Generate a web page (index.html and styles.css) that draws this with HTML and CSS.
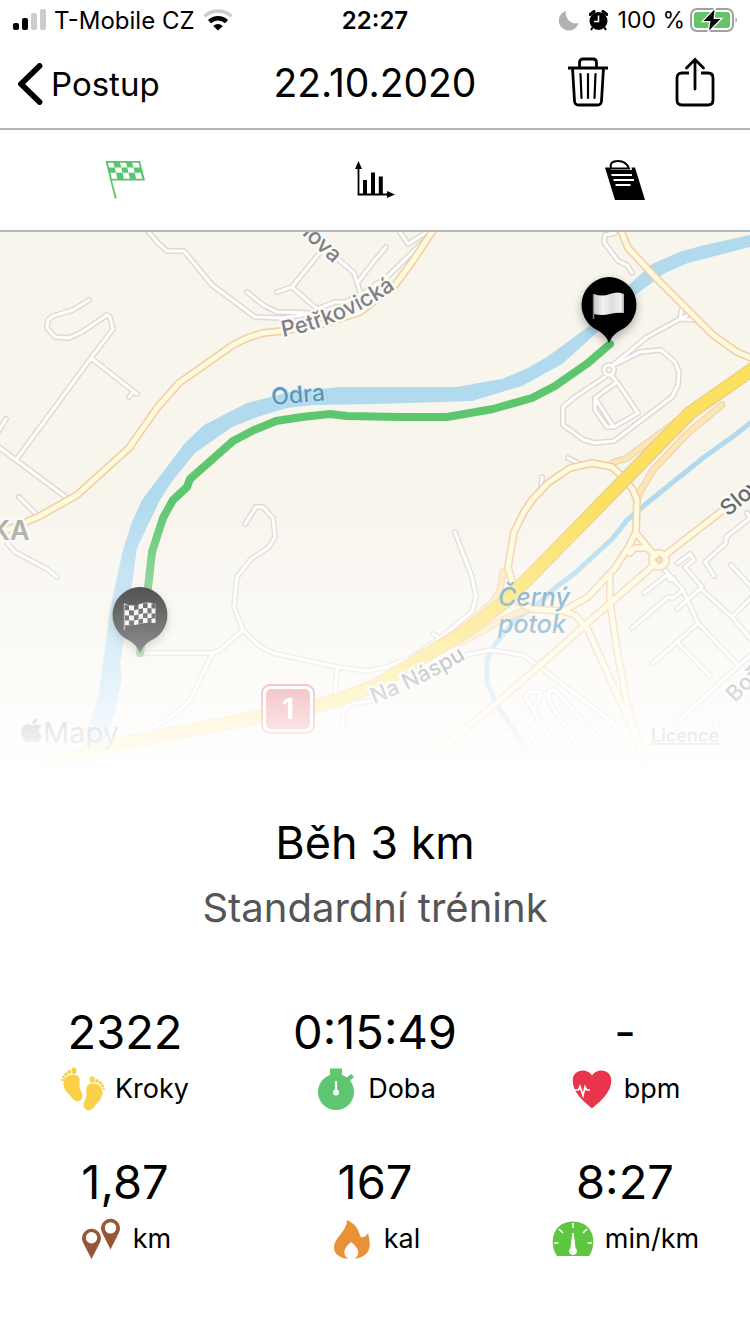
FILE: index.html
```html
<!DOCTYPE html>
<html lang="cs">
<head>
<meta charset="utf-8">
<meta name="viewport" content="width=device-width, initial-scale=1">
<title>22.10.2020</title>
<link rel="stylesheet" href="styles.css">
</head>
<body>
<div class="status-bar">
  <div class="status-left">
    <svg class="signal" viewBox="0 0 34 22" aria-hidden="true">
      <rect x="1" y="14" width="6" height="7" rx="2"/><rect x="10" y="9" width="6" height="12" rx="2"/>
      <rect class="off" x="19" y="4" width="6" height="17" rx="2"/><rect class="off" x="28" y="0" width="6" height="21" rx="2"/>
    </svg>
    <span>T-Mobile CZ</span>
    <svg class="wifi" viewBox="0 0 30 22" aria-hidden="true">
      <path d="M1.500 7.200A20 20 0 0 1 28.500 7.200" fill="none" stroke="#ccc" stroke-width="3.500"/>
      <path d="M6.500 12.600A12.500 12.500 0 0 1 23.500 12.600" fill="none" stroke="#000" stroke-width="4.500"/>
      <path d="M15 21.500l-4.800-4.600a7 7 0 0 1 9.600 0z"/>
    </svg>
  </div>
  <time class="clock">22:27</time>
  <div class="status-right">
    <svg class="moon" viewBox="0 0 20 21" aria-hidden="true"><path d="M7 1A10 10 0 1 0 19.500 13A10 10 0 0 1 7 1z" fill="#b1b1b1"/></svg>
    <svg class="alarm" viewBox="0 0 19 21" aria-hidden="true">
      <circle cx="9.500" cy="11" r="9"/><path d="M1.200 4.500L5 1.500M17.800 4.500L14 1.500" stroke="#000" stroke-width="3" stroke-linecap="round"/>
      <path d="M3.500 17.500L2 20M15.500 17.500L17 20" stroke="#000" stroke-width="2"/><path d="M9.500 5.500V11.500H5" fill="none" stroke="#fff" stroke-width="1.500"/>
    </svg>
    <span class="charge">100&nbsp;%
      <svg class="battery" viewBox="0 0 48 24" aria-hidden="true">
        <rect x="1" y="1" width="42" height="22" rx="6" fill="none" stroke="#a0a0a0" stroke-width="2"/>
        <rect x="4" y="4" width="36" height="16" rx="3" fill="#65c466"/><path d="M45.500 9q3 3 0 6z" fill="#a0a0a0"/>
        <path d="M24.500 1.500L13.500 13h7L19 22.500 30.500 11h-7z" stroke="#fff" stroke-width="2.500" paint-order="stroke"/>
      </svg>
    </span>
  </div>
</div>

<header class="nav-bar">
  <button class="back" type="button">
    <svg class="chevron" viewBox="0 0 26 42" aria-hidden="true"><path d="M22.500 3L4 21 22.500 39" fill="none" stroke="#000" stroke-width="5.800" stroke-linecap="round" stroke-linejoin="round"/></svg>
    <span>Postup</span>
  </button>
  <h1 class="nav-title">22.10.2020</h1>
  <div class="nav-actions">
    <button type="button" aria-label="Smazat">
      <svg class="trash" viewBox="0 0 42 50" fill="none" stroke="#000" aria-hidden="true">
        <path d="M1 11H41" stroke-width="3"/><path d="M12.500 10V5.500Q12.500 2 16 2H26Q29.500 2 29.500 5.500V10M5.500 11L7.500 44Q7.800 48 11.500 48H30.500Q34.200 48 34.500 44L36.500 11" stroke-width="2.800"/>
        <path d="M13.500 17L14.500 41M21 17V41M28.500 17L27.500 41" stroke-width="2.200" stroke-linecap="round"/>
      </svg>
    </button>
    <button type="button" aria-label="Sdílet">
      <svg class="share" viewBox="0 0 40 50" fill="none" stroke="#000" stroke-width="2.800" aria-hidden="true">
        <path d="M14 16H7Q2 16 2 21V43Q2 48 7 48H33Q38 48 38 43V21Q38 16 33 16H26"/><path d="M20 32V3M11.500 11L20 2.500 28.500 11" stroke-linecap="round"/>
      </svg>
    </button>
  </div>
</header>

<nav class="tabs" aria-label="Zobrazení">
  <button type="button" aria-label="Trasa">
    <svg class="tab-icon" viewBox="0 0 40 40" aria-hidden="true">
      <path d="M.500 1H35L40 20.500H7L11.800 38.500H9.800z" fill="#59c66e"/>
      <g fill="#fff"><path d="M2.800 2.800h5.500l1.300 4.700H4.100zM15 2.800h6l1.300 4.700h-6zM27.200 2.800h6.300l1.200 4.700h-6.200zM9.700 7.500h6.600l1.200 5.200H11zM22.300 7.500h6.200l1.300 5.200h-6.300zM5.400 12.700H11l1.300 6H6.800zM17.500 12.700h6l1.400 6h-6zM29.800 12.700h6l1.500 6h-6.200z"/></g>
    </svg>
  </button>
  <button type="button" aria-label="Grafy">
    <svg class="tab-icon" viewBox="0 0 40 40" aria-hidden="true">
      <path d="M3.500 5V34.500H35" fill="none" stroke="#000" stroke-width="1.800"/><path d="M3.500 1L7 9H0zM40 34.500L32 38V31z"/>
      <path d="M8 20h4v15H8zM16 12.500h4V35h-4zM23.800 16.500h4V35h-4z"/>
    </svg>
  </button>
  <button type="button" aria-label="Poznámky">
    <svg class="tab-icon" viewBox="0 0 40 40" aria-hidden="true">
      <path d="M0 7.500H4.500L6 10H27L26.500 7.500H30L40 40H10z"/><path d="M6 8.500Q4 1 13 1Q21 1 24 8.500z" fill="#fff" stroke="#000" stroke-width="2"/>
      <path d="M6.500 15H27M8.500 20H29M10.500 25H25.500" stroke="#fff" stroke-width="1.800"/>
    </svg>
  </button>
</nav>

<main>
  <svg class="map" viewBox="0 232 750 540" role="img" aria-label="Mapa trasy">
    <defs>
      <linearGradient id="fade" x1="0" y1="0" x2="0" y2="1">
        <stop offset="0" stop-color="#fff" stop-opacity="0"/><stop offset="1" stop-color="#fff"/>
      </linearGradient>
      <linearGradient id="cloth"><stop offset="0" stop-color="#c8c8c8"/><stop offset=".3" stop-color="#f2f2f2"/><stop offset=".6" stop-color="#dedede"/><stop offset=".9" stop-color="#f0f0f0"/><stop offset="1" stop-color="#aaa"/></linearGradient>
      <filter id="shadow" x="-40%" y="-30%" width="180%" height="170%"><feDropShadow dx="0" dy="4" stdDeviation="5" flood-opacity=".3"/></filter>
      <path id="minor" d="M148 231L158 243 167 251 184 251 212 285 255 317 283 318 317 313M247 292L263 305 277 312 310 313M277 292L292 287 322 250M292 287L317 309 335 302 345 302 361 295 375 285 387 277 425 240M338 259L354 273 361 295M358 282L375 260 386 247M400 232L408 244 427 232M89 300L73 310 53 316 48 320 47 328 55 337 69 338 82 332 107 315 110 317 113 329 91 358 16 460M91 358L137 394M133 392L129 397M-4 445L16 460 67 498M-2 432L6 419M19 497L36 514M7 543L15 552 47 569 57 577M245 524L256 507 263 507 273 518 275 537 269 547 251 559 237 577 234 607 243 630 258 645 273 653 337 667 367 671 387 667 410 658 440 638 472 612 476 597 472 577 455 532M433 634L440 638M243 630L220 650 213 653 142 653M212 655L190 700 173 716 157 725 143 737 137 752M337 667L335 693M375 700L347 705 343 713 343 727 328 758M614 365L640 352 661 350 675 362 679 372 678 385 672 397 614 441 595 443 584 440 563 425 563 407 575 397 605 377M614 370a5 5 0 1 1-10 0a5 5 0 1 1 10 0M613 365L647 337 680 319 682 308M680 319L698 320M680 319L690 314M611 375L617 382 595 398 595 410 607 427 614 427 638 413 617 382M595 398L613 426M615 233L605 235 604 242 618 261 627 265 632 273M568 458L580 464M542 477L541 490M662 567L683 590 698 623 738 665M754 652L677 722M698 623L677 642 653 663M677 642L710 676M700 588L732 617 754 643M732 617L754 595M731 565L754 590M702 587L677 609M702 587L685 567 694 560 690 554 678 563M683 590L673 598 668 597 632 628M644 593L667 575 670 580 674 578M714 576L705 562 726 543 726 537 754 515M747 513L752 520M467 655L490 650 523 655 540 667 613 723 627 752M525 697L530 692 540 692 540 697 533 710 525 697M533 710L540 723 528 730 545 760M540 723L562 753M625 770L600 740 560 696Q554 686 548 693L550 703 590 765M714 722L732 755"/>
      <path id="ramp" d="M720 391L685 415 627 458 612 463M722 405L688 433 653 470 640 492 637 500M503 572L500 590 492 603 455 633 415 657M535 608L525 610 502 620 458 645"/>
      <path id="secondary" d="M434 229L412 262 395 285 360 312 320 325 283 331 263 333 247 338 233 345 179 383 157 408 129 448 77 495 40 516 7 530-5 534M620 228L628 248 658 280 713 335 737 352 756 360M515 600L532 609 563 611 588 597 615 568 628 548 636 532 637 500 633 490 623 477 612 467 592 463 570 468 548 483 532 500 524 512 514 532 508 567 514 588M636 533L654 555M630 553L635 548 647 548 656 556M664 556L723 510 754 486M655 564L583 627 538 667 492 707 425 762M563 611L575 615 588 630 645 756M610 574L610 603 617 650 628 707 645 765M666 560a7 7 0 1 1-14 0a7 7 0 1 1 14 0"/>
      <path id="petrkovicka" d="M283 337Q352 324 412 276"/>
      <path id="naspu" d="M374 704Q430 682 480 650"/>
    </defs>
    <rect y="232" width="750" height="540" fill="#f8f5ed"/>
    <path class="water" d="M750 235L705 245 682 251 652 264 632 282 588 327 547 357 528 368 502 379 456 387 340 387 290 392 247 403 204 425 185 443 157 480 142 500 132 522 123 550 117 577 110 610 103 663 98 697 88 727 80 772H96L103 743 115 713 122 677 120 663 126 627 137 548 160 500 173 480 195 453 232 427 257 417 287 408 313 405 375 404 472 401 522 386 562 364 592 337 638 293 665 273 688 263 750 247z"/>
    <path class="stream" d="M754 420L735 435 703 458 652 499 627 520 613 538 575 573 555 588 535 607 515 620 493 647 487 660 487 683 498 707 515 732 528 752"/>
    <use href="#minor" class="road minor-edge"/><use href="#minor" class="road minor-fill"/>
    <use href="#ramp" class="road ramp-edge"/><use href="#ramp" class="road ramp-fill"/>
    <use href="#secondary" class="road secondary-edge"/><use href="#secondary" class="road secondary-fill"/>
    <circle cx="659" cy="560" r="2" fill="#fbf3e0" stroke="#e9bd94" stroke-width="1.500"/>
    <g class="road"><path class="highway-edge" d="M760 364L690 413 600 505 505 602 468 630 435 650 375 686 338 700 312 707 260 717 113 745 45 765"/><path class="highway-fill" d="M760 364L690 413 600 505 505 602 468 630 435 650 375 686 338 700 312 707 260 717 113 745 45 765"/></g>
    <path class="track" d="M610 344L588 363 555 386 532 398 493 409 447 417 398 417 347 416 330 414 302 417 276 421 254 430 233 441 190 479 187 487 173 500 163 518 152 552 148 588 140 653"/>
    <g class="map-label">
      <text transform="translate(296 229) rotate(43)">nova</text>
      <text><textPath href="#petrkovicka">Petřkovická</textPath></text>
      <text><textPath href="#naspu">Na Náspu</textPath></text>
      <text transform="translate(728 517) rotate(-40)" class="dark">Slov</text>
      <text transform="translate(735 703) rotate(-45)">Bož</text>
      <text x="-9" y="540" class="district">KA</text>
      <text transform="translate(272 405) rotate(-5)" class="water-name">Odra</text>
      <g class="water-name oblique"><text x="498" y="606">Černý</text><text x="498" y="633">potok</text></g>
    </g>
    <g>
      <rect x="262" y="685" width="52" height="48" rx="8" fill="#fff" stroke="#e04b50" stroke-width="2"/><rect x="266" y="689" width="44" height="40" rx="5" fill="#e04b50"/>
      <text class="shield" x="288" y="719">1</text>
    </g>
    <g filter="url(#shadow)"><path d="M609 277a28 28 0 0 1 11 53.500Q612 335 609 343Q606 335 598 330.500A28 28 0 0 1 609 277z"/></g>
    <path d="M593.500 294v25" stroke="#737980" stroke-width="1.500"/><path d="M594 294Q602 297 610 294T624 294V313Q618 312 610 314T594 314z" fill="url(#cloth)"/>
    <g filter="url(#shadow)"><path d="M140 587a28 28 0 0 1 11 53.500Q143 645 140 653Q137 645 129 640.500A28 28 0 0 1 140 587z"/></g>
    <path d="M124.500 603v27" stroke="#81868b" stroke-width="1.500"/><path d="M125 604Q133 607 140 604T155.500 604V623Q148 622 140 624T125 625z" fill="#eee"/>
    <path d="M125 605l4 .6v4.700h-4zM134 605.500l4.500-1.200v5l-4.500 1zM143 603.500l4.500-.500v5h-4.500zM129 610.300l5 .2v5h-5zM138.500 609.300l4.500-1v5l-4.500 1.200zM147.500 608l4 .5v5h-4zM125 615.500h4v5h-4zM134 615.500l4.500-1v5l-4.500 1zM143 613.500l4.500-.500v5h-4.500zM129 620.500h5v4.500h-5zM138.500 619.500l4.500-1v5l-4.500.500zM147.500 618h4v5h-4zM151.500 603.500h4v5h-4zM151.500 613.500h4v5h-4z" fill="#181818"/>
    <g class="attribution">
      <path d="M37.500 718.500c.3 2.900-2.300 5.600-5.200 5.500-.2-2.900 2.400-5.400 5.200-5.500zM32 725.500c1.500 0 3.200-1.500 5.500-1.300 1.400.1 3 .8 3.900 2.200-3.800 2.500-3.200 7.600.7 9.300-1 3-3.200 6.800-5.700 6.900-1.600 0-2.400-1-4.300-1s-2.800 1-4.300 1c-4-.1-8.400-9.400-5.500-14.700 1.300-2.300 3.300-3.700 5.500-3.700 1.700 0 3 1.300 4.200 1.300z"/>
      <text class="brand" x="43" y="743">Mapy</text>
      <a href="#licence"><text class="licence" x="651" y="742">Licence</text></a>
    </g>
    <rect y="500" width="750" height="272" fill="url(#fade)" pointer-events="none"/>
  </svg>

  <section class="summary">
    <h2>Běh 3 km</h2>
    <p>Standardní trénink</p>
  </section>

  <section class="stats">
    <div class="stat"><strong>2322</strong><span class="metric">
      <svg viewBox="0 0 44 44" fill="#f9d048" aria-hidden="true"><path id="sole" d="M2.500 18C1.500 11 7 7.500 12 7.500C17.500 7.500 19.500 11 18.500 16C17.500 22 22 26 21.500 30C20.500 35 14.500 35.500 11.500 31.500C8 27 3.500 24 2.500 18z"/><ellipse cx="13" cy="3.800" rx="2.600" ry="3.200"/><circle cx="8.200" cy="5" r="1.900"/><circle cx="5" cy="7.300" r="1.700"/><circle cx="2.600" cy="10" r="1.500"/><circle cx="1.500" cy="13" r="1.300"/><use href="#sole" transform="matrix(-1 0 0 1 44 9)"/><ellipse cx="31.200" cy="12.500" rx="2.600" ry="3.200"/><circle cx="36" cy="13.800" r="1.900"/><circle cx="39.300" cy="16" r="1.700"/><circle cx="41.600" cy="18.800" r="1.500"/><circle cx="42.800" cy="21.600" r="1.200"/></svg>
      Kroky</span></div>
    <div class="stat"><strong>0:15:49</strong><span class="metric">
      <svg viewBox="0 0 44 44" aria-hidden="true"><path d="M16 1.500H28V9H16zM31 11.500L37.500 7 40 10 33.500 16z" fill="#5ec670"/><circle cx="22" cy="25" r="18" fill="#5ec670"/><path d="M22 14V25" stroke="#fff" stroke-width="2.200"/><circle cx="22" cy="25.500" r="3" fill="#fff"/></svg>
      Doba</span></div>
    <div class="stat"><strong>-</strong><span class="metric">
      <svg viewBox="0 0 44 44" aria-hidden="true"><path d="M22 41.500C12 33 3 25 2.700 14C2.500 2 17 .5 22 8.500C27 .5 41.500 2 41.300 14C41 25 32 33 22 41.500z" fill="#e9344c"/><path d="M4 23H8.500L10 19.500 13 28.500 15 20 16.500 23H20" fill="none" stroke="#fff" stroke-width="1.700"/></svg>
      bpm</span></div>
    <div class="stat"><strong>1,87</strong><span class="metric">
      <svg viewBox="0 0 44 44" fill="#985638" aria-hidden="true"><path fill-rule="evenodd" d="M12.500 42L4 25.500A9.500 9.500 0 1 1 21 25.500zM12.500 15a5.700 5.700 0 1 0 0 11.400a5.700 5.700 0 1 0 0-11.400zM31.500 32.500L23 15.500A9.500 9.500 0 1 1 40 15.500zM31.500 5.200a5.700 5.700 0 1 0 0 11.400a5.700 5.700 0 1 0 0-11.400z"/></svg>
      km</span></div>
    <div class="stat"><strong>167</strong><span class="metric">
      <svg viewBox="0 0 44 44" aria-hidden="true"><path d="M17 3C28 8 28 14 31 20.500Q36 20 38 16C41 28 42 39 24.500 42C31 37 29 31 21 25C13 32 12.500 37 18 42C4 40 1 31 7 22C11 16 17 11 17 3z" fill="#e89137"/></svg>
      kal</span></div>
    <div class="stat"><strong>8:27</strong><span class="metric">
      <svg viewBox="0 0 44 44" aria-hidden="true"><path d="M6 39C-2 28 0 5 22 4.500C44 5 46 28 38 39z" fill="#5fc640"/><path d="M22 6V11M8 12L12 16M36 12L32 16M3 26H7.500M41 26H36.500" stroke="#fff" stroke-width="1.700"/><path d="M21.200 16H22.800L24.500 31A4 4 0 1 1 19.500 31z" fill="#fff"/></svg>
      min/km</span></div>
  </section>
</main>
</body>
</html>
```

FILE: styles.css
```css
* { box-sizing: border-box; }
body {
  margin: 0;
  background: #fff;
  color: #000;
  font-family: Inter, "Liberation Sans", sans-serif;
}
svg { display: block; }
button {
  margin: 0;
  padding: 0;
  border: 0;
  background: none;
  color: inherit;
  font: inherit;
}

.status-bar {
  display: grid;
  grid-template-columns: 1fr auto 1fr;
  align-items: center;
  height: 40px;
  padding: 0 12px;
  font-size: 24px;
}
.status-left, .status-right { display: flex; align-items: center; }
.status-left { gap: 8px; }
.status-right { justify-content: flex-end; gap: 10px; }
.signal { width: 34px; height: 22px; }
.signal .off { fill: #ccc; }
.wifi { width: 30px; height: 22px; }
.clock { font-weight: 600; }
.moon { width: 20px; height: 21px; }
.alarm { width: 19px; height: 21px; }
.charge { display: flex; align-items: center; gap: 5px; font-size: 23px; }
.battery { width: 48px; height: 24px; }

.nav-bar {
  display: grid;
  grid-template-columns: 1fr auto 1fr;
  align-items: center;
  height: 90px;
  padding: 0 17px 4px;
  border-bottom: 2px solid #b1b7b7;
}
.back {
  display: flex;
  align-items: center;
  gap: 8px;
  justify-self: start;
  padding-top: 4px;
  font-size: 33px;
}
.chevron { width: 26px; height: 42px; }
.nav-title { margin: 0; font-size: 39px; font-weight: 400; }
.nav-actions { display: flex; justify-content: flex-end; gap: 66px; padding-right: 18px; }
.trash { width: 42px; height: 50px; }
.share { width: 40px; height: 50px; }

.tabs {
  display: grid;
  grid-template-columns: repeat(3, 1fr);
  height: 102px;
  border-bottom: 2px solid #b4b6b8;
}
.tabs button { display: grid; place-items: center; }
.tab-icon { width: 40px; height: 40px; }

.map { width: 100%; height: auto; }
.water { fill: #b1daee; }
.stream { fill: none; stroke: #b1daee; stroke-width: 5; }
.road { fill: none; stroke-linecap: round; stroke-linejoin: round; }
.minor-edge { stroke: #dedad3; stroke-width: 6; }
.minor-fill { stroke: #fff; stroke-width: 3; }
.ramp-edge { stroke: #f0cfaa; stroke-width: 7; }
.ramp-fill { stroke: #fbe7b4; stroke-width: 5; }
.secondary-edge { stroke: #f0cda8; stroke-width: 8; }
.secondary-fill { stroke: #fefadb; stroke-width: 5; }
.highway-edge { stroke: #efc38c; stroke-width: 14; }
.highway-fill { stroke: #fbe15f; stroke-width: 12; }
.track { fill: none; stroke: #5dc66f; stroke-width: 8; stroke-linecap: round; stroke-linejoin: round; }
.map-label {
  fill: #7c8084;
  stroke: #fbf9f5;
  stroke-width: 5px;
  stroke-linejoin: round;
  paint-order: stroke;
  font-size: 22px;
  font-weight: 500;
}
.map-label .dark { fill: #66696c; }
.map-label .district { fill: #a8a8a5; font-size: 27px; font-weight: 600; }
.water-name { fill: #5797bb; stroke-width: 2px; stroke: #c8e3f0; font-size: 23px; }
.oblique { font-size: 25px; font-style: italic; stroke: none; }
.shield { fill: #fff; font-size: 28px; font-weight: 700; text-anchor: middle; }
.attribution { fill: #707275; }
.brand { font-size: 29px; }
.licence { font-size: 18px; font-weight: 600; text-decoration: underline; }

.summary { padding: 38px 16px 0; text-align: center; }
.summary h2 { margin: 0; font-size: 45px; font-weight: 400; line-height: 65px; }
.summary p { margin: 0; color: #555; font-size: 40px; line-height: 65px; }

.stats {
  display: grid;
  grid-template-columns: repeat(3, 1fr);
  row-gap: 36px;
  padding: 60px 0 24px;
}
.stat { display: flex; flex-direction: column; align-items: center; }
.stat strong { font-size: 47px; font-weight: 400; line-height: 64px; }
.metric {
  display: flex;
  align-items: center;
  gap: 10px;
  font-size: 27px;
  line-height: 50px;
}
.metric svg { width: 44px; height: 44px; }
```
